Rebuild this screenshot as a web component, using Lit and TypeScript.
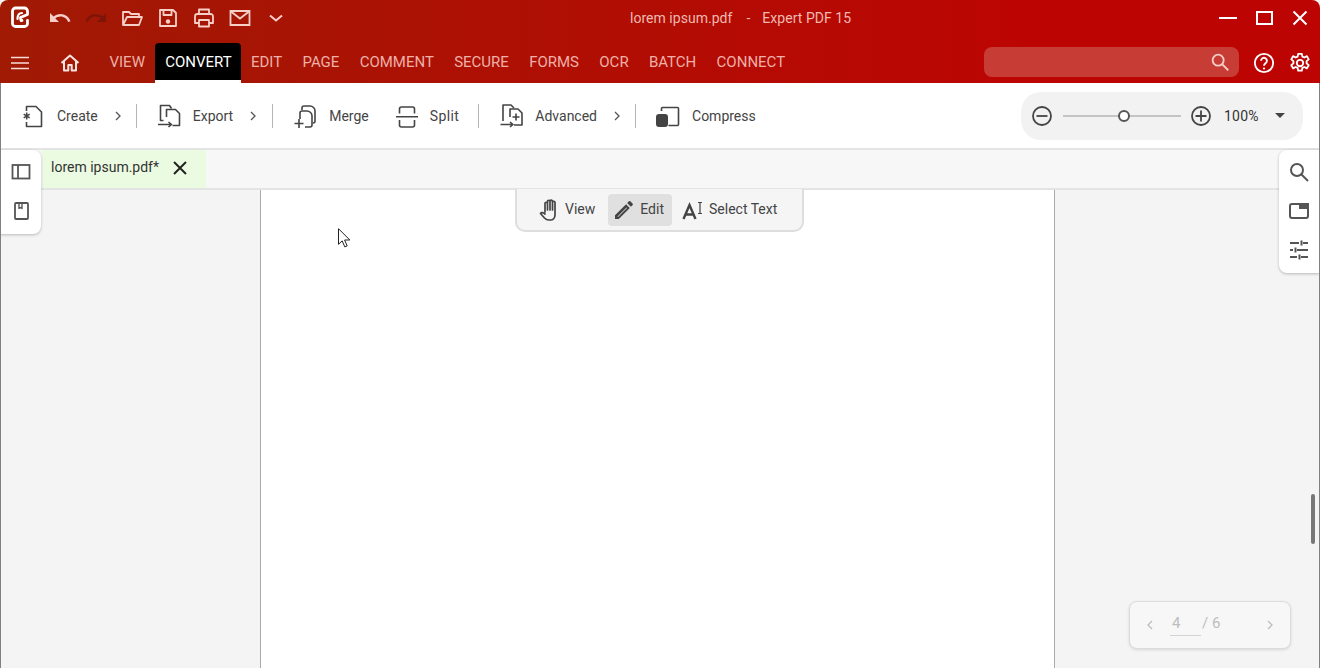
import { LitElement, html, css, svg } from 'lit';
import { customElement } from 'lit/decorators.js';

const icon = (w: number, body: unknown, cls = '') => html`<svg class="ic ${cls}" width=${w} height=${w} viewBox="0 0 24 24" fill="none" stroke="currentColor" stroke-width="2">${body}</svg>`;

const tabs = ['VIEW', 'CONVERT', 'EDIT', 'PAGE', 'COMMENT', 'SECURE', 'FORMS', 'OCR', 'BATCH', 'CONNECT'];

const chevron = html`<svg class="chev" width="8" height="10" viewBox="0 0 8 10" fill="none" stroke="currentColor" stroke-width="1.3"><path d="M2 1l4 4-4 4"/></svg>`;

@customElement('app-root')
export class AppRoot extends LitElement {
  static styles = css`
    :host {
      display: block;
      position: relative;
      height: 668px;
      overflow: hidden;
      font-family: Roboto, sans-serif;
      font-size: 14px;
      background: #f4f4f4;
      color: #444;
    }
    svg { display: block; flex: none; }

    .header {
      height: 83px;
      background: linear-gradient(90deg, #a01a04 0%, #bc0503 78%, #bc0503 100%);
      border-radius: 8px 8px 0 0;
      display: flex;
      flex-direction: column;
    }
    .titlebar {
      height: 43px;
      position: relative;
      display: flex;
      align-items: center;
      padding: 0 0 7px 9px;
      box-sizing: border-box;
      color: #f5cfc8;
    }
    .logo { margin-right: 18px; color: #fff; }
    .qa { display: flex; align-items: center; gap: 12px; }
    .qa .dim { color: #7d1508; }
    .title {
      position: absolute;
      left: 630px;
      top: 10px;
      white-space: pre;
      color: #eeb9b1;
      font-size: 14px;
      line-height: 16px;
      letter-spacing: 0.03px;
    }
    .title .app { margin-left: -2px; }
    .winbtns { margin-left: auto; display: flex; align-items: center; gap: 19px; padding-right: 12px; color: #fff; }

    .navbar { height: 40px; display: flex; align-items: stretch; color: #fff; }
    .menu { margin: 0 0 0 10px; align-self: center; }
    .home { margin: 0 17.35px 0 28px; align-self: center; }
    .tab {
      padding: 0 10.15px 2px;
      display: flex;
      align-items: center;
      color: #eeb0a8;
      font-size: 15px;
    }
    .tab.active { padding-right: 9.15px; background: #000; color: #fff; border-radius: 4px 4px 0 0; box-shadow: inset 0 -3px 0 #fff; }
    .nav-right { margin-left: auto; display: flex; align-items: center; padding-right: 9px; }
    .search {
      width: 255px;
      height: 30px;
      box-sizing: border-box;
      background: #c83c36;
      border-radius: 8px;
      display: flex;
      align-items: center;
      justify-content: flex-end;
      padding-right: 8px;
      color: #f5cfc8;
      margin: 0 14px 2px 0;
    }
    .help { margin-right: 14px; }

    .toolbar {
      height: 67px;
      background: #fff;
      border-bottom: 2px solid #e4e4e4;
      box-sizing: border-box;
      display: flex;
      align-items: center;
      padding: 0 17px 0 21px;
    }
    .tool { display: flex; align-items: center; color: #444; white-space: nowrap; }
    .tool span { margin-left: 11px; }
    .tool .chev { margin-left: 16px; color: #555; }
    .sep { width: 1px; height: 24px; background: #b5b5b5; margin: 0 21px 0 14px; }
    .sep.after-export { margin-left: 15px; }
    .sep.after-split { margin-left: 19px; }
    .sep.after-advanced { margin-right: 20px; }
    .spacer { width: 26px; }
    .tool .split-label { letter-spacing: 0.4px; }

    .zoom {
      margin-left: auto;
      width: 282px;
      height: 48px;
      border-radius: 20px;
      background: #f2f2f2;
      display: flex;
      align-items: center;
      padding-left: 10px;
      box-sizing: border-box;
      color: #444;
    }
    .slider { position: relative; width: 118px; height: 2px; background: #c4c4c4; margin: 0 9px 0 10px; }
    .knob {
      position: absolute;
      left: 55px;
      top: -5px;
      width: 12px;
      height: 12px;
      box-sizing: border-box;
      border: 2px solid #555;
      border-radius: 50%;
      background: #fff;
    }
    .pct { margin-left: 12px; color: #333; letter-spacing: 0.2px; }
    .caret { margin-left: 16px; width: 0; height: 0; border: 5px solid transparent; border-top-color: #444; border-bottom: 0; }

    .tabbar {
      height: 40px;
      box-sizing: border-box;
      background: #f7f7f7;
      border-bottom: 2px solid #e4e4e4;
      padding-left: 42px;
      display: flex;
    }
    .doc {
      width: 164px;
      background: #ebfbe2;
      display: flex;
      align-items: center;
      padding: 0 0 2px 9px;
      box-sizing: border-box;
      color: #333;
    }
    .doc span { margin-bottom: 2px; }
    .doc .x { margin-left: 10px; color: #222; }

    .viewer { height: 478px; display: flex; padding-left: 260px; }
    .page {
      width: 795px;
      box-sizing: border-box;
      background: #fff;
      border-left: 1px solid #aaa;
      border-right: 1px solid #aaa;
    }

    .float {
      position: absolute;
      background: #fff;
      display: flex;
      flex-direction: column;
      align-items: center;
      box-shadow: 0 1px 3px rgba(0, 0, 0, 0.25);
      color: #555;
    }
    .left-panel { left: 0; top: 150px; width: 41px; height: 84px; border-radius: 0 8px 8px 0; padding-top: 12px; box-sizing: border-box; gap: 19px; }
    .right-panel { right: 0; top: 150px; width: 41px; height: 123px; border-radius: 8px 0 0 8px; padding: 10px 2px 0 0; box-sizing: border-box; gap: 15px; }

    .modes {
      position: absolute;
      left: 515px;
      top: 189px;
      width: 289px;
      height: 43px;
      box-sizing: border-box;
      background: #f5f5f5;
      border: 2px solid #dedede;
      border-top: 0;
      border-radius: 0 0 10px 10px;
      display: flex;
      align-items: center;
      padding: 0 0 0 21px;
    }
    .mode { height: 32px; display: flex; align-items: center; border-radius: 4px; color: #444; white-space: nowrap; }
    .mode span { margin-bottom: 2px; }
    .mode.view { padding-right: 13px; gap: 3px; }
    .mode.edit { padding: 0 8px 0 4px; gap: 4px; background: #e0e0e0; }
    .mode.select { padding-left: 10px; gap: 3px; }

    .pager {
      position: absolute;
      left: 1129px;
      top: 601px;
      width: 162px;
      height: 48px;
      box-sizing: border-box;
      background: #f7f7f7;
      border: 1px solid #dcdcdc;
      border-radius: 8px;
      box-shadow: 0 1px 3px rgba(0, 0, 0, 0.12);
      display: flex;
      align-items: center;
      padding: 0 16px 2px;
      color: #bdbdbd;
      font-size: 15px;
    }
    .pager svg { margin-top: 2px; }
    .pnum { width: 31px; box-sizing: border-box; padding: 0 0 2px 2px; margin-left: 16px; border-bottom: 1px solid #d4d4d4; line-height: 20px; }
    .ptotal { margin: 0 0 3px 1px; }
    .pager .next { margin-left: auto; }

    .scroll { position: absolute; left: 1311px; top: 494px; width: 4px; height: 50px; background: #777; border-radius: 2px; }
    .cursor { position: absolute; left: 338px; top: 228px; }
    .edge { position: absolute; bottom: 0; width: 1px; background: #808080; top: 83px; }
    .edge.l { left: 0; }
    .edge.r { right: 0; }
  `;

  render() {
    return html`
      <div class="header">
        <div class="titlebar">
          <svg class="logo" width="21" height="24" viewBox="0 0 21 24" fill="none" stroke="currentColor" stroke-width="2.800" stroke-linecap="round" stroke-linejoin="round">
            <path d="M11.500 20.500h-5a3 3 0 0 1-3-3V5a3 3 0 0 1 3-3h9a3 3 0 0 1 3 3v3.500l-7 3 .5 3h1"/>
            <path d="M11.500 20.500h4a3 3 0 0 0 3-3v-3"/>
            <path stroke-width="2.200" d="M8.500 13c0-3.500 1.500-6 4.500-6"/>
          </svg>
          <div class="qa">
            ${icon(24, svg`<path fill="currentColor" stroke="none" d="M12.500 8c-2.650 0-5.050 1-6.900 2.600L2 7v9h9l-3.620-3.620c1.390-1.160 3.160-1.880 5.120-1.880 3.540 0 6.550 2.310 7.600 5.500l2.370-.78C21.080 11.030 17.150 8 12.500 8z"/>`)}
            ${icon(24, svg`<path fill="currentColor" stroke="none" d="M18.400 10.600C16.550 9 14.150 8 11.500 8c-4.650 0-8.580 3.030-9.960 7.220L3.900 16c1.050-3.190 4.050-5.500 7.600-5.500 1.950 0 3.730.72 5.120 1.880L13 16h9V7l-3.600 3.600z"/>`, 'dim')}
            ${icon(24, svg`<path stroke-width="1.800" stroke-linejoin="round" d="M3 19V6h6l2 2h8v3M3 19h16l3-8H7z"/>`)}
            ${icon(24, svg`<path stroke-width="1.800" stroke-linejoin="round" d="M4 4h13l3 3v13H4zM7.500 4v5h8V4"/><circle cx="12" cy="15.500" r="2.200" fill="currentColor" stroke="none"/>`)}
            ${icon(24, svg`<path stroke-width="1.800" stroke-linejoin="round" d="M7 8V3.500h10V8M7 17H3v-6.500A2.500 2.500 0 0 1 5.500 8h13a2.500 2.500 0 0 1 2.500 2.500V17h-4M7 14h10v6.500H7z"/>`)}
            ${icon(24, svg`<path stroke-width="1.800" d="M2.500 5h19v14h-19zM3 5.500l9 7 9-7"/>`)}
            ${icon(24, svg`<path stroke-width="2" d="M6 9.500l6 5 6-5"/>`)}
          </div>
          <div class="title">lorem ipsum.pdf    -    <span class="app">Expert PDF 15</span></div>
          <div class="winbtns">
            <svg width="18" height="18" viewBox="0 0 18 18" fill="none" stroke="currentColor" stroke-width="2"><path d="M0 9h18"/></svg>
            <svg width="17" height="14" viewBox="0 0 17 14" fill="none" stroke="currentColor" stroke-width="2"><rect x="1" y="1" width="15" height="12"/></svg>
            <svg width="16" height="16" viewBox="0 0 16 16" fill="none" stroke="currentColor" stroke-width="2"><path d="M1.500 1.500l13 13M14.500 1.500l-13 13"/></svg>
          </div>
        </div>
        <div class="navbar">
          <svg class="menu" width="20" height="14" viewBox="0 0 20 14" fill="none" stroke="#f7dcd8" stroke-width="1.700"><path d="M1 1.500h18M1 7h18M1 12.500h18"/></svg>
          <svg class="home" width="24" height="24" viewBox="0 0 24 24" fill="none" stroke="#f7e3df" stroke-width="2" stroke-linejoin="round"><path d="M3.500 12L12 4.500 20.500 12M6 10v9.500h4.300v-5.500h3.400v5.500H18V10"/></svg>
          ${tabs.map((t) => html`<div class="tab ${t === 'CONVERT' ? 'active' : ''}">${t}</div>`)}
          <div class="nav-right">
            <div class="search">
              <svg width="22" height="22" viewBox="0 0 24 24" fill="none" stroke="currentColor" stroke-width="2"><circle cx="10" cy="10" r="6"/><path d="M14.500 14.500L21 21"/></svg>
            </div>
            <svg class="help" width="22" height="22" viewBox="0 0 24 24" fill="none" stroke="#fff" stroke-width="2"><circle cx="12" cy="12" r="10"/><path d="M8.800 9.500a3.200 3.200 0 1 1 5.200 2.500c-1.200 1-2 1.500-2 3"/><circle cx="12" cy="18" r="1.200" fill="#fff" stroke="none"/></svg>
            <svg width="22" height="22" viewBox="0 0 24 24" fill="none" stroke="#fff" stroke-width="2" stroke-linejoin="round"><circle cx="12" cy="12" r="3.500"/><path d="M10 2h4l.6 3 2.200 1 2.700-1.500 2 3.500-2.300 2v2.400l2.300 2-2 3.500-2.700-1.500-2.200 1-.6 3h-4l-.6-3-2.200-1-2.700 1.500-2-3.500 2.300-2v-2.400l-2.300-2 2-3.500 2.700 1.500 2.200-1z"/></svg>
          </div>
        </div>
      </div>

      <div class="toolbar">
        <div class="tool">
          <svg width="25" height="25" viewBox="0 0 25 25" fill="none" stroke="currentColor" stroke-width="1.600" stroke-linejoin="round"><path d="M5.500 8V3.500H15l5.500 5.500v14.500h-15V19"/><path stroke-width="1.500" d="M5.700 9.500v7M2.700 11.200l6 3.600M8.700 11.200l-6 3.600"/></svg>
          <span>Create</span>${chevron}
        </div>
        <div class="sep"></div>
        <div class="tool">
          <svg width="24" height="25" viewBox="0 0 24 25" fill="none" stroke="currentColor" stroke-width="1.600" stroke-linejoin="round"><path d="M5.500 17.500h-3v-15h9l2 3"/><path d="M8.500 14V6.500h9l4 4v12h-7"/><path d="M0 21.500h13M10.500 19l3 2.500-3 2.500"/></svg>
          <span>Export</span>${chevron}
        </div>
        <div class="sep after-export"></div>
        <div class="tool">
          <svg width="24" height="25" viewBox="0 0 24 25" fill="none" stroke="currentColor" stroke-width="1.600" stroke-linejoin="round"><path d="M8 7V5a2 2 0 0 1 2-2h6a5 5 0 0 1 5 5v10a2 2 0 0 1-2 2"/><path d="M11 24h5a2 2 0 0 0 2-2v-9a5 5 0 0 0-5-5H8a2 2 0 0 0-2 2v6"/><path d="M0.500 20.500h9M5 16v9"/></svg>
          <span>Merge</span>
        </div>
        <div class="spacer"></div>
        <div class="tool">
          <svg width="24" height="24" viewBox="0 0 24 24" fill="none" stroke="currentColor" stroke-width="1.600" stroke-linejoin="round"><path d="M4.500 9.500V5a2 2 0 0 1 2-2h11a2 2 0 0 1 2 2v4.500M4.500 16v5a2 2 0 0 0 2 2h11a2 2 0 0 0 2-2v-5M1 12.700h22"/></svg>
          <span class="split-label">Split</span>
        </div>
        <div class="sep after-split"></div>
        <div class="tool">
          <svg width="24" height="25" viewBox="0 0 24 25" fill="none" stroke="currentColor" stroke-width="1.600" stroke-linejoin="round"><path d="M3 18V2h8l3 3"/><path d="M10 14V6h8l4 4v12h-8"/><path d="M0.500 21.500h12M10 19l3 2.500-3 2.500M16 10.500v7M12.500 14h7"/></svg>
          <span>Advanced</span>${chevron}
        </div>
        <div class="sep after-advanced"></div>
        <div class="tool">
          <svg width="25" height="24" viewBox="0 0 25 24" fill="none" stroke="currentColor" stroke-width="1.600"><path d="M5.500 7V4.500a1 1 0 0 1 1-1h15a1 1 0 0 1 1 1v16a1 1 0 0 1-1 1h-9"/><rect x="0" y="10" width="12" height="13" rx="3" fill="currentColor" stroke="none"/></svg>
          <span>Compress</span>
        </div>

        <div class="zoom">
          <svg width="22" height="22" viewBox="0 0 22 22" fill="none" stroke="currentColor" stroke-width="1.800"><circle cx="11" cy="11" r="9"/><path d="M5.500 11h11"/></svg>
          <div class="slider"><div class="knob"></div></div>
          <svg width="22" height="22" viewBox="0 0 22 22" fill="none" stroke="currentColor" stroke-width="1.800"><circle cx="11" cy="11" r="9"/><path d="M5.500 11h11M11 5.500v11"/></svg>
          <span class="pct">100%</span>
          <div class="caret"></div>
        </div>
      </div>

      <div class="tabbar">
        <div class="doc">
          <span>lorem ipsum.pdf*</span>
          <svg class="x" width="22" height="22" viewBox="0 0 22 22" fill="none" stroke="currentColor" stroke-width="2"><path d="M5 5l12 12M17 5L5 17"/></svg>
        </div>
      </div>

      <div class="viewer"><div class="page"></div></div>

      <div class="float left-panel">
        <svg width="20" height="20" viewBox="0 0 20 20" fill="none" stroke="currentColor" stroke-width="1.800"><rect x="1.500" y="3" width="17" height="13.500"/><path d="M7 3v14"/></svg>
        <svg width="20" height="20" viewBox="0 0 20 20" fill="none" stroke="currentColor" stroke-width="1.800" stroke-linejoin="round"><rect x="4" y="2" width="13" height="16" rx="1"/><path stroke-width="1.400" d="M8 2.500v5l1.500-1 1.500 1v-5"/></svg>
      </div>
      <div class="float right-panel">
        <svg width="24" height="24" viewBox="0 0 24 24" fill="none" stroke="currentColor" stroke-width="2"><circle cx="10" cy="10" r="6"/><path d="M14.500 14.500L21 21"/></svg>
        <svg width="24" height="24" viewBox="0 0 24 24" fill="none" stroke="currentColor" stroke-width="2"><rect x="3" y="5" width="18" height="14" rx="2"/><rect x="12" y="4" width="10" height="6" fill="currentColor" stroke="none"/></svg>
        <svg width="24" height="24" viewBox="0 0 24 24" fill="none" stroke="currentColor" stroke-width="2"><path d="M3 5h9M16 5h5M14.500 2.500v5M3 12h3M10 12h11M8.500 9.500v5M3 19h7M14 19h7M12.500 16.500v5"/></svg>
      </div>

      <div class="modes">
        <div class="mode view">
          <svg width="24" height="24" viewBox="0 0 24 24" fill="none" stroke="currentColor" stroke-width="1.700" stroke-linejoin="round" stroke-linecap="round"><path d="M7 14V5.500a1.200 1.200 0 0 1 2.500 0V3.500a1.200 1.200 0 0 1 2.500 0v-.2a1.200 1.200 0 0 1 2.500.2v1a1.200 1.200 0 0 1 2.500 0V17c0 3-2 5-4.500 5h-2c-2 0-3-1-4-2l-4-4.500c1-1.500 2.500-1 4.500 .5M9.500 5.500V12M12 3.500V12M14.500 3.500V12"/></svg>
          <span>View</span>
        </div>
        <div class="mode edit">
          <svg width="24" height="24" viewBox="0 0 24 24" fill="currentColor"><path d="M3 17.250V21h3.750L17.810 9.940l-3.750-3.750L3 17.250zM20.710 7.040c.39-.39.39-1.020 0-1.410l-2.340-2.340a1 1 0 0 0-1.410 0l-1.830 1.830 3.750 3.750 1.830-1.830z"/><path fill="#e0e0e0" d="M5.500 18.500l9-9 .5 .5-9 9z"/></svg>
          <span>Edit</span>
        </div>
        <div class="mode select">
          <svg width="24" height="24" viewBox="0 0 24 24" fill="none" stroke="currentColor"><path stroke-width="2.400" d="M1.500 21L7.500 7l6 14M4 16.500h7"/><path stroke-width="1.200" d="M18 5v10M16 4.500h4M16 15.500h4"/></svg>
          <span>Select Text</span>
        </div>
      </div>

      <div class="pager">
        <svg width="8" height="10" viewBox="0 0 8 10" fill="none" stroke="currentColor" stroke-width="1.300"><path d="M6 1L2 5l4 4"/></svg>
        <span class="pnum">4</span>
        <span class="ptotal">/ 6</span>
        <svg class="next" width="8" height="10" viewBox="0 0 8 10" fill="none" stroke="currentColor" stroke-width="1.300"><path d="M2 1l4 4-4 4"/></svg>
      </div>

      <div class="scroll"></div>
      <svg class="cursor" width="13" height="20" viewBox="0 0 13 20"><path d="M.5.700v15.600l3.700-3.400 2.600 6 2.400-1-2.600-5.900h5.200z" fill="#fff" stroke="#222" stroke-width="1"/></svg>
      <div class="edge l"></div>
      <div class="edge r"></div>
    `;
  }
}
